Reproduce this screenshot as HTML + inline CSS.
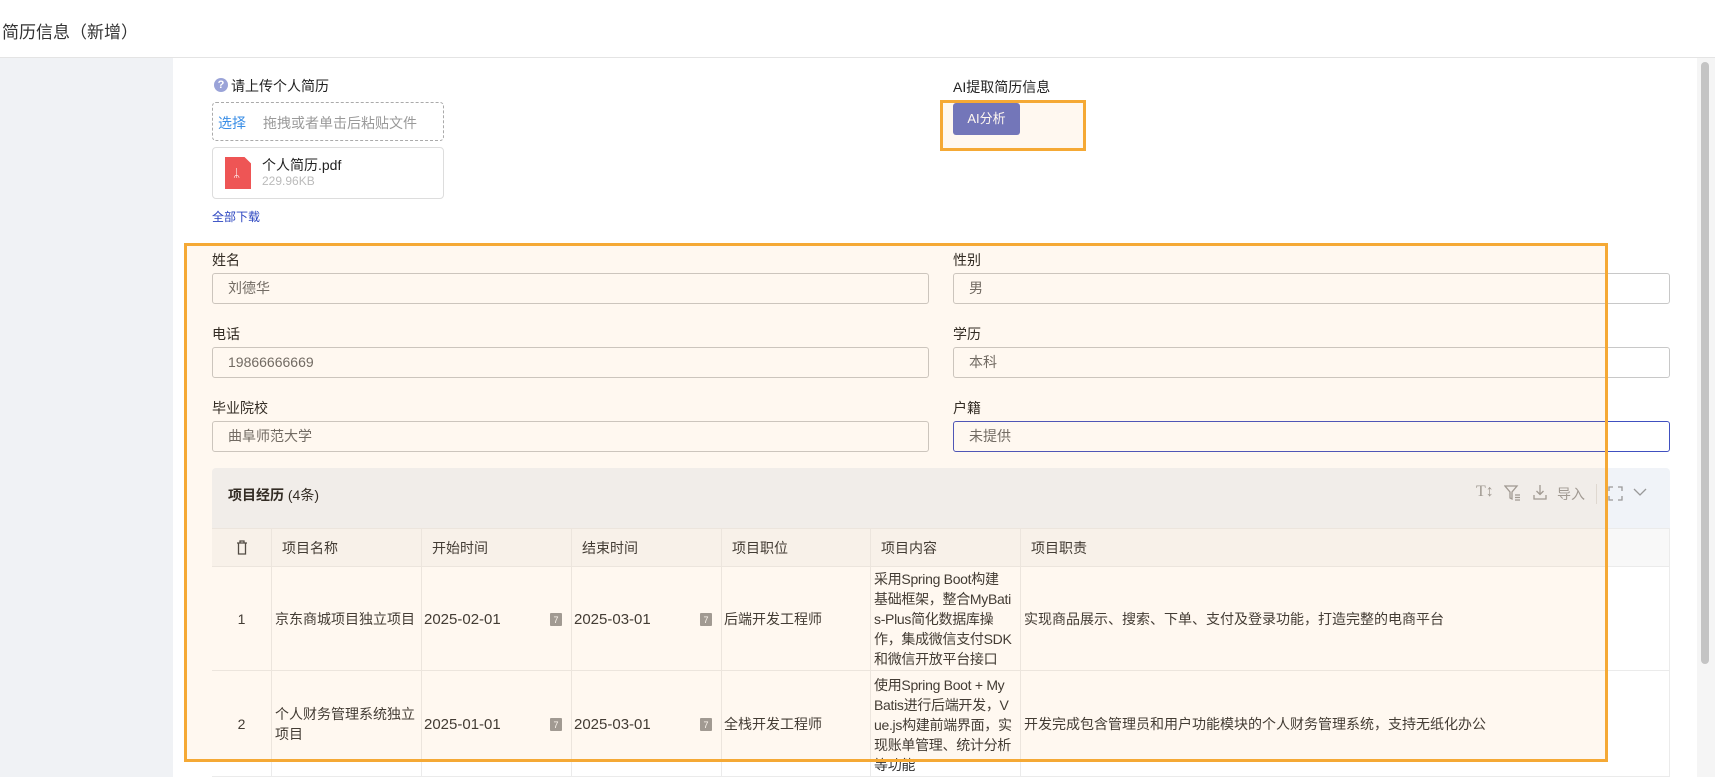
<!DOCTYPE html>
<html><head><meta charset="utf-8"><style>
*{box-sizing:border-box;margin:0;padding:0}
body{width:1715px;height:777px;overflow:hidden;background:#fff;font-family:"Liberation Sans","Noto Sans CJK SC",sans-serif;color:#333;position:relative;font-size:14px}
.a{position:absolute;white-space:nowrap}
.inp{position:absolute;height:31px;border:1px solid #c8c8c8;border-radius:3px;background:#fff;padding-left:15px;line-height:29px;color:#666;font-size:14px}
.lbl{position:absolute;font-size:14px;color:#222}
.cell{position:absolute;border-right:1px solid #ebebeb;font-size:14px;color:#333;display:flex;align-items:center}
.hrow{position:absolute;left:212px;width:1458px;border-bottom:1px solid #ebebeb}
.cal{display:inline-block;width:12px;height:13px;background:#999;border-radius:1px;position:absolute;color:#fff;font-size:9px;line-height:14px;text-align:center}
.wrap{display:block;width:138px;white-space:normal;word-break:break-all;line-height:20px;letter-spacing:-0.3px}
</style></head><body>
<div class="a" style="left:2px;top:18px;font-size:17px;color:#333">简历信息（新增）</div>
<div class="a" style="left:0;top:57px;width:1715px;height:1px;background:#e4e4e4"></div>
<div class="a" style="left:0;top:58px;width:173px;height:719px;background:#f0f2f5"></div>
<div class="a" style="left:1697px;top:58px;width:18px;height:719px;background:#f5f5f5"></div>
<div class="a" style="left:1701px;top:62px;width:8px;height:602px;background:#c4c4c4;border-radius:4px"></div>

<div class="a" style="left:214px;top:78px;width:14px;height:14px;border-radius:50%;background:#9aa3d8;color:#fff;font-size:11px;text-align:center;line-height:14px;font-weight:bold">?</div>
<div class="a" style="left:231px;top:76px;font-size:14px;color:#222">请上传个人简历</div>
<div class="a" style="left:212px;top:102px;width:232px;height:39px;border:1px dashed #aaa;border-radius:4px"></div>
<div class="a" style="left:218px;top:113px;font-size:14px;color:#3a8ee6">选择</div>
<div class="a" style="left:263px;top:113px;font-size:14px;color:#999">拖拽或者单击后粘贴文件</div>
<div class="a" style="left:212px;top:147px;width:232px;height:52px;border:1px solid #ddd;border-radius:4px"></div>
<div class="a" style="left:225px;top:157px;width:26px;height:32px;background:#ee5555;clip-path:polygon(0 0,75% 0,100% 20%,100% 100%,0 100%)"></div>
<div class="a" style="left:233px;top:166px;color:#fff;font-size:12px">ᛦ</div>
<div class="a" style="left:262px;top:155px;font-size:14px;color:#222">个人简历.pdf</div>
<div class="a" style="left:262px;top:174px;font-size:12px;color:#bbb">229.96KB</div>
<div class="a" style="left:212px;top:208px;font-size:12px;color:#2a44c0">全部下载</div>

<div class="a" style="left:953px;top:77px;font-size:14px;color:#222">AI提取简历信息</div>
<div class="a" style="left:953px;top:103px;width:67px;height:32px;background:#6872c4;border-radius:3px;color:#fff;font-size:13px;text-align:center;line-height:32px">AI分析</div>

<div class="lbl" style="left:212px;top:250px">姓名</div>
<div class="inp" style="left:212px;top:273px;width:717px">刘德华</div>
<div class="lbl" style="left:953px;top:250px">性别</div>
<div class="inp" style="left:953px;top:273px;width:717px">男</div>
<div class="lbl" style="left:212px;top:324px">电话</div>
<div class="inp" style="left:212px;top:347px;width:717px">19866666669</div>
<div class="lbl" style="left:953px;top:324px">学历</div>
<div class="inp" style="left:953px;top:347px;width:717px">本科</div>
<div class="lbl" style="left:212px;top:398px">毕业院校</div>
<div class="inp" style="left:212px;top:421px;width:717px">曲阜师范大学</div>
<div class="lbl" style="left:953px;top:398px">户籍</div>
<div class="inp" style="left:953px;top:421px;width:717px;border-color:#4050c0">未提供</div>

<div class="a" style="left:212px;top:468px;width:1458px;height:60px;background:#f0f3f8;border-radius:4px 4px 0 0"></div>
<div class="a" style="left:228px;top:485px;font-size:14px;font-weight:bold;color:#222">项目经历 <span style="font-weight:normal">(4条)</span></div>
<div class="a" style="left:1476px;top:483px;font-size:16px;color:#999;font-family:'Liberation Serif',serif">T↕</div>
<svg class="a" style="left:1504px;top:485px" width="17" height="16" viewBox="0 0 17 16" fill="none" stroke="#999" stroke-width="1.3"><path d="M1 1h12l-5 6v7l-2-1V7z"/><path d="M11 10h5M11 12.5h5M11 15h5"/></svg>
<svg class="a" style="left:1533px;top:484px" width="14" height="16" viewBox="0 0 14 16" fill="none" stroke="#999" stroke-width="1.3"><path d="M7 1v9M3.5 7l3.5 3.5L10.5 7M1 11v4h12v-4"/></svg>
<div class="a" style="left:1557px;top:484px;font-size:14px;color:#999">导入</div>
<div class="a" style="left:1596px;top:484px;width:1px;height:20px;background:#ddd"></div>
<svg class="a" style="left:1608px;top:486px" width="15" height="15" viewBox="0 0 15 15" fill="none" stroke="#999" stroke-width="1.3"><path d="M1 5V1h4M10 1h4v4M14 10v4h-4M5 14H1v-4"/></svg>
<svg class="a" style="left:1633px;top:487px" width="14" height="10" viewBox="0 0 14 10" fill="none" stroke="#999" stroke-width="1.3"><path d="M1 2l6 6 6-6"/></svg>

<div class="hrow" style="top:528px;height:39px;background:#f8f8f8;border-top:1px solid #ebebeb"></div>
<div class="hrow" style="top:567px;height:104px;background:#fff"></div>
<div class="hrow" style="top:671px;height:106px;background:#fff"></div>
<div class="cell" style="left:212px;top:528px;width:60px;height:39px;justify-content:center"><svg width="12" height="15" viewBox="0 0 12 15" fill="none" stroke="#444" stroke-width="1.3"><path d="M1 3h10M4 3V1h4v2M2.5 3v11h7V3"/></svg></div>
<div class="cell" style="left:272px;top:528px;width:150px;height:39px;padding-left:10px">项目名称</div>
<div class="cell" style="left:422px;top:528px;width:150px;height:39px;padding-left:10px">开始时间</div>
<div class="cell" style="left:572px;top:528px;width:150px;height:39px;padding-left:10px">结束时间</div>
<div class="cell" style="left:722px;top:528px;width:149px;height:39px;padding-left:10px">项目职位</div>
<div class="cell" style="left:871px;top:528px;width:150px;height:39px;padding-left:10px">项目内容</div>
<div class="cell" style="left:1021px;top:528px;width:649px;height:39px;padding-left:10px">项目职责</div>
<div class="cell" style="left:212px;top:567px;width:60px;height:104px;justify-content:center">1</div>
<div class="cell" style="left:272px;top:567px;width:150px;height:104px;padding-left:3px">京东商城项目独立项目</div>
<div class="cell" style="left:422px;top:567px;width:150px;height:104px;padding-left:2px;font-size:15px">2025-02-01<span class="cal" style="left:128px;top:46px">7</span></div>
<div class="cell" style="left:572px;top:567px;width:150px;height:104px;padding-left:2px;font-size:15px">2025-03-01<span class="cal" style="left:128px;top:46px">7</span></div>
<div class="cell" style="left:722px;top:567px;width:149px;height:104px;padding-left:2px">后端开发工程师</div>
<div class="cell" style="left:871px;top:567px;width:150px;height:104px;padding-left:3px"><span class="wrap">采用Spring Boot构建基础框架，整合MyBatis-Plus简化数据库操作，集成微信支付SDK和微信开放平台接口</span></div>
<div class="cell" style="left:1021px;top:567px;width:649px;height:104px;padding-left:3px">实现商品展示、搜索、下单、支付及登录功能，打造完整的电商平台</div>
<div class="cell" style="left:212px;top:671px;width:60px;height:106px;justify-content:center">2</div>
<div class="cell" style="left:272px;top:671px;width:150px;height:106px;padding-left:3px;white-space:normal;line-height:20px">个人财务管理系统独立项目</div>
<div class="cell" style="left:422px;top:671px;width:150px;height:106px;padding-left:2px;font-size:15px">2025-01-01<span class="cal" style="left:128px;top:47px">7</span></div>
<div class="cell" style="left:572px;top:671px;width:150px;height:106px;padding-left:2px;font-size:15px">2025-03-01<span class="cal" style="left:128px;top:47px">7</span></div>
<div class="cell" style="left:722px;top:671px;width:149px;height:106px;padding-left:2px">全栈开发工程师</div>
<div class="cell" style="left:871px;top:671px;width:150px;height:106px;padding-left:3px;align-items:flex-start;padding-top:4px"><span class="wrap">使用Spring Boot + MyBatis进行后端开发，Vue.js构建前端界面，实现账单管理、统计分析等功能</span></div>
<div class="cell" style="left:1021px;top:671px;width:649px;height:106px;padding-left:3px">开发完成包含管理员和用户功能模块的个人财务管理系统，支持无纸化办公</div>

<div class="a" style="left:940px;top:100px;width:146px;height:51px;border:3px solid #f5a935;background:rgba(250,170,60,0.08)"></div>
<div class="a" style="left:184px;top:243px;width:1424px;height:519px;border:3px solid #f5a935;background:rgba(250,170,60,0.08)"></div>
</body></html>
